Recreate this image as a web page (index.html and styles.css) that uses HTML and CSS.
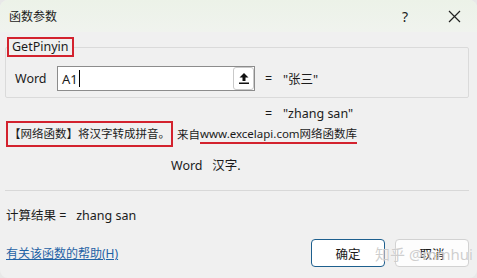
FILE: index.html
```
<!DOCTYPE html>
<html lang="zh-CN">

<head>
    <meta charset="UTF-8">
    <title>函数参数</title>
    <link rel="stylesheet" href="styles.css">
</head>

<body>
    <div class="dialog">
        <div class="titlebar">
            <span class="title">函数参数</span>
            <span class="help">?</span>
            <span class="close">
                <svg width="13" height="13" viewBox="0 0 13 13">
                    <path d="M1 1 L12 12 M12 1 L1 12" stroke="#222" stroke-width="1.2" fill="none" />
                </svg>
            </span>
        </div>

        <div class="content">
            <fieldset class="group">
                <legend class="func-name">GetPinyin</legend>
                <div class="arg-row">
                    <label class="arg-label">Word</label>
                    <div class="arg-input">
                        <span class="arg-text">A1</span>
                        <span class="caret"></span>
                        <span class="picker">
                            <svg width="12" height="13" viewBox="0 0 12 13">
                                <path d="M6 1 L1.5 5.5 H4.5 V9 H7.5 V5.5 H10.5 Z" fill="#111" />
                                <rect x="1" y="10.5" width="10" height="1.5" fill="#111" />
                            </svg>
                        </span>
                    </div>
                    <span class="eq">=</span>
                    <span class="arg-value">"张三"</span>
                </div>
            </fieldset>

            <div class="result-row">
                <span class="eq">=</span>
                <span class="arg-value">"zhang san"</span>
            </div>

            <div class="desc">
                <span class="mark">【网络函数】将汉字转成拼音。</span>
                <span class="from">来自</span><span class="source">www.excelapi.com网络函数库</span>
            </div>

            <p class="arg-desc">Word&nbsp;&nbsp; 汉字.</p>

            <hr class="divider">

            <p class="calc">计算结果 =&nbsp;&nbsp; zhang san</p>

            <div class="footer">
                <a class="help-link" href="#">有关该函数的帮助(H)</a>
                <div class="buttons">
                    <button class="btn btn-primary">确定</button>
                    <button class="btn">取消</button>
                </div>
            </div>
        </div>

        <span class="watermark">知乎 @mmhui</span>
    </div>
</body>

</html>
```

FILE: styles.css
```
body {
    margin: 0;
    padding: 0;
    background: #e8e8e8;
    font-family: "Noto Sans", "Noto Sans CJK SC", sans-serif;
    font-size: 12.5px;
    color: #1b1b1b;
}

.dialog {
    position: relative;
    width: 477px;
    height: 278px;
    background: #f0f0f0;
    border-radius: 8px;
    overflow: hidden;
}

.titlebar {
    display: flex;
    align-items: center;
    height: 32px;
    padding-left: 9px;
    background: linear-gradient(to bottom, #ecf2e8, #f0f3ee);
}

.title {
    flex: 1;
    font-size: 12px;
}

.help {
    width: 20px;
    margin-right: 33px;
    text-align: center;
    font-size: 14px;
}

.close {
    display: flex;
    margin-right: 16px;
}

.content {
    padding: 0 8px 0 5px;
}

.group {
    margin: 5px 0 0 0;
    padding: 0 0 6px 1px;
    border: 1px solid #dadada;
    border-radius: 2px;
    min-width: 0;
}

.func-name {
    margin: 0;
    padding: 0 3px;
    line-height: 16px;
    border: 2px solid #d3222e;
}

.arg-row {
    display: flex;
    align-items: center;
    margin-top: 9px;
    padding-left: 8px;
}

.arg-label {
    width: 42px;
}

.arg-input {
    display: flex;
    align-items: center;
    box-sizing: border-box;
    width: 198px;
    height: 25px;
    padding-left: 4px;
    background: #fff;
    border: 1px solid #8c8c8c;
}

.arg-text {
    font-size: 13px;
}

.caret {
    width: 1px;
    height: 17px;
    margin-left: 1px;
    background: #000;
}

.picker {
    display: flex;
    align-items: center;
    justify-content: center;
    box-sizing: border-box;
    width: 21px;
    height: 23px;
    margin-left: auto;
    background: #fff;
    border: 1px solid #c9c9c9;
    border-radius: 3px;
}

.eq {
    margin-left: 10px;
    width: 18px;
}

.result-row {
    display: flex;
    margin-top: 9px;
    padding-left: 250px;
    line-height: 14px;
}

.desc {
    display: flex;
    align-items: center;
    height: 26px;
    font-size: 11.5px;
}

.mark {
    box-sizing: border-box;
    height: 26px;
    margin-left: 1px;
    padding: 0 1px;
    line-height: 22px;
    border: 2px solid #d3222e;
}

.from {
    margin-left: 4px;
}

.source {
    line-height: 16px;
    border-bottom: 2px solid #d3222e;
    margin-top: 2px;
}

.arg-desc {
    margin: 11px 0 0 166px;
    line-height: 16px;
}

.divider {
    margin: 16px 0 0 0;
    border: none;
    border-top: 1px solid #d8d8d8;
}

.calc {
    margin: 17px 0 0 1px;
    line-height: 16px;
}

.footer {
    display: flex;
    align-items: center;
    justify-content: space-between;
    margin-top: 15px;
}

.help-link {
    margin-left: 1px;
    font-size: 12px;
    color: #1f62a5;
    text-decoration: underline;
}

.buttons {
    display: flex;
    gap: 10px;
}

.btn {
    width: 74px;
    height: 28px;
    font-family: inherit;
    font-size: 12.5px;
    color: #1b1b1b;
    background: #fdfdfd;
    border: 1px solid #d2d2d2;
    border-radius: 4px;
}

.btn-primary {
    background: #fff;
    border-color: #1d5f8e;
}

.watermark {
    position: absolute;
    left: 375px;
    top: 243px;
    font-size: 15px;
    white-space: nowrap;
    color: rgba(185, 185, 185, 0.7);
    text-shadow: 0 0 1px #fff;
    pointer-events: none;
}
```
